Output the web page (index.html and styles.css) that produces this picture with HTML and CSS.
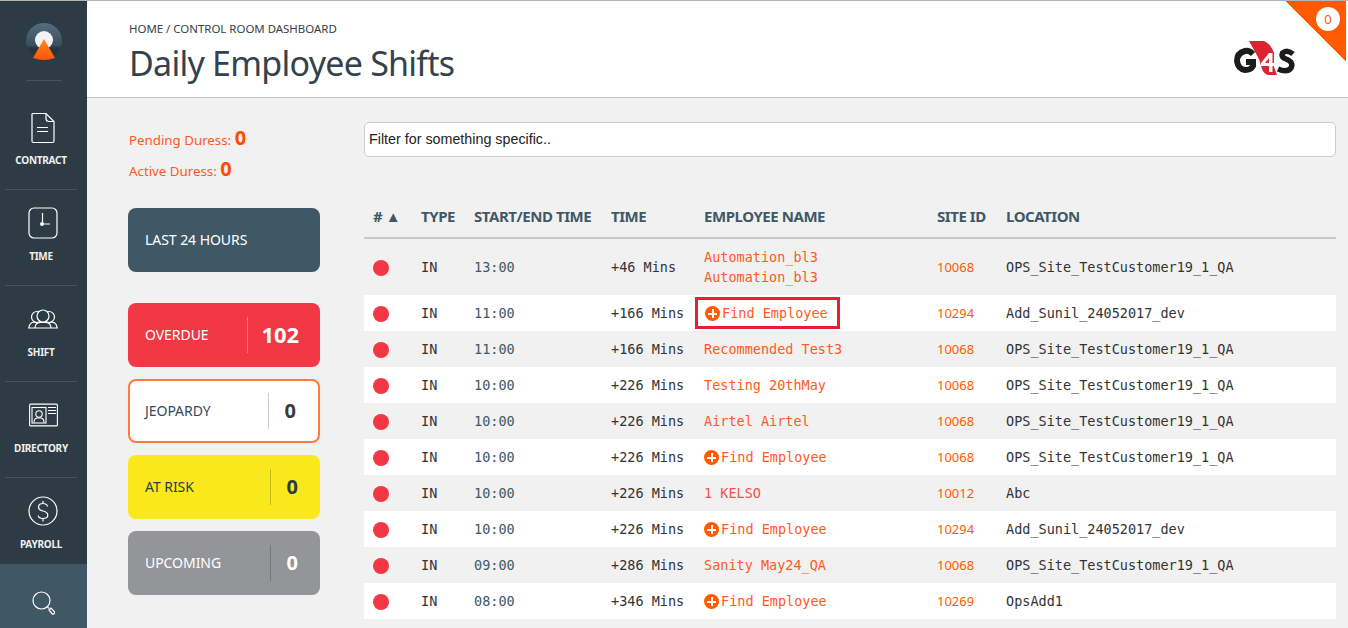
FILE: index.html
```html
<!DOCTYPE html>
<html lang="en">
<head>
<meta charset="utf-8">
<title>Daily Employee Shifts</title>
<link rel="stylesheet" href="styles.css">
</head>
<body>
<div class="app">
  <nav class="sidebar">
    <div class="brand">
      <svg width="36" height="42" viewBox="0 0 36 42">
        <defs>
          <linearGradient id="dome" x1="0" y1="0" x2="0" y2="1"><stop offset="0" stop-color="#546f80"/><stop offset=".62" stop-color="#3a4e5b"/><stop offset=".7" stop-color="#27333c"/><stop offset="1" stop-color="#2a3741"/></linearGradient>
          <linearGradient id="cone" x1="0" y1="0" x2="0" y2="1"><stop offset="0" stop-color="#ff8a1e"/><stop offset="1" stop-color="#ff5208"/></linearGradient>
        </defs>
        <circle cx="18" cy="19" r="18" fill="url(#dome)"/>
        <circle cx="18" cy="18" r="9" fill="#f1f3f6"/>
        <path d="M18 17L29 36Q18 40 7 36Z" fill="url(#cone)"/>
      </svg>
    </div>
    <a class="nav-item nav-contract">
      <svg width="24" height="31" viewBox="0 0 24 31" fill="none" stroke="#fff" stroke-width="1.2"><path d="M2 1H15L23 9V28.500Q23 30 21.500 30H2.500Q1 30 1 28.500V2Q1 1 2 1Z"/><path d="M15 1V6Q15 9 18 9H23M6 15H17M6 19H17" /></svg>
      <span>CONTRACT</span>
    </a>
    <a class="nav-item">
      <svg width="30" height="32" viewBox="0 0 30 32" fill="none" stroke="#fff" stroke-width="1.2"><rect x="1" y="1" width="28" height="30" rx="5"/><path d="M14.500 6V17H22"/><circle cx="14" cy="17" r="1.300" fill="#fff"/></svg>
      <span>TIME</span>
    </a>
    <a class="nav-item">
      <svg width="30" height="32" viewBox="0 0 30 20" fill="none" stroke="#fff" stroke-width="1.200"><circle cx="9" cy="8" r="5.500"/><circle cx="21" cy="8" r="5.500"/><circle cx="15" cy="7" r="6" fill="#2d3b45"/><path d="M1 19Q1 14 6 13L9 14M29 19Q29 14 24 13L21 14M7 19Q7 14 12 13.500H18Q23 14 23 19M0 19H30"/></svg>
      <span>SHIFT</span>
    </a>
    <a class="nav-item">
      <svg width="29" height="32" viewBox="0 0 29 23" fill="none" stroke="#fff" stroke-width="1.100"><rect x=".6" y=".6" width="27.800" height="21.800" rx="1"/><rect x="3" y="4" width="14" height="15.500"/><circle cx="10" cy="10.500" r="3.200"/><path d="M5 19Q5 15 8 14.500H12Q15 15 15 19M19 4H27M19 7H27M19 10H27" /></svg>
      <span>DIRECTORY</span>
    </a>
    <a class="nav-item nav-last">
      <svg width="30" height="31" viewBox="0 0 30 31" fill="none" stroke="#fff" stroke-width="1.200"><circle cx="15" cy="15.500" r="14"/><path d="M19.500 11Q19 8 15 8Q10.500 8 10.500 11.500Q10.500 14.500 15 15.500Q19.800 16.500 19.800 19.800Q19.800 23 15 23Q10.500 23 10.200 20M15 5.500V8M15 23V26"/></svg>
      <span>PAYROLL</span>
    </a>
    <a class="nav-search">
      <svg width="23" height="25" viewBox="0 0 23 25" fill="none" stroke="#fff" stroke-width="1.200"><circle cx="9.500" cy="9.500" r="8.500"/><path d="M15.500 16L17 17.500M17 19L19 17L22.500 20.800Q23 21.500 22 22.800Q21 23.500 20.300 23Z"/></svg>
    </a>
  </nav>
  <div class="main">
    <header class="topbar">
      <div>
        <div class="crumbs">HOME / CONTROL ROOM DASHBOARD</div>
        <h1>Daily Employee Shifts</h1>
      </div>
      <svg class="logo" width="62" height="36" viewBox="0 0 62 36">
        <path d="M15 0H30Q37 3 40 12V26L43 34H34Q30 33 28 28L25 18Z" fill="#dc2430"/>
        <path d="M35 12L27 22V25H35V31H38.500V25H42V22H38.500V12ZM35 17V22H31Z" fill="#fff" fill-rule="evenodd"/>
        <path d="M19 13Q15 9 11 10Q3 12 3 20Q4 28 11 29Q17 29 19 25V21H12" fill="none" stroke="#1c1c1c" stroke-width="6"/>
        <path d="M59 13Q53 8 48.500 12Q46.500 16 52 18Q60 21 57 27Q53 32 44 28" fill="none" stroke="#1c1c1c" stroke-width="5.500"/>
      </svg>
      <div class="corner"><span class="corner-count">0</span></div>
    </header>
    <div class="content">
      <aside class="left">
        <div class="duress">Pending Duress: <b>0</b></div>
        <div class="duress">Active Duress: <b>0</b></div>
        <div class="card card-hours"><span class="card-label">LAST 24 HOURS</span></div>
        <div class="card card-overdue"><span class="card-label">OVERDUE</span><span class="card-num">102</span></div>
        <div class="card card-jeopardy"><span class="card-label">JEOPARDY</span><span class="card-num">0</span></div>
        <div class="card card-risk"><span class="card-label">AT RISK</span><span class="card-num">0</span></div>
        <div class="card card-upcoming"><span class="card-label">UPCOMING</span><span class="card-num">0</span></div>
      </aside>
      <section class="right">
        <input class="filter" type="text" placeholder="Filter for something specific..">
        <table class="shifts">
          <colgroup><col class="c1"><col class="c2"><col class="c3"><col class="c4"><col class="c5"><col class="c6"><col></colgroup>
          <thead>
            <tr><th># ▲</th><th>TYPE</th><th>START/END TIME</th><th>TIME</th><th>EMPLOYEE NAME</th><th>SITE ID</th><th>LOCATION</th></tr>
          </thead>
          <tbody>
            <tr><td><i class="dot"></i></td><td>IN</td><td class="st">13:00</td><td>+46 Mins</td><td class="emp">Automation_bl3<br>Automation_bl3</td><td class="site">10068</td><td>OPS_Site_TestCustomer19_1_QA</td></tr>
            <tr><td><i class="dot"></i></td><td>IN</td><td class="st">11:00</td><td>+166 Mins</td><td class="emp"><span class="find boxed"><i class="plus"></i>Find Employee</span></td><td class="site">10294</td><td>Add_Sunil_24052017_dev</td></tr>
            <tr><td><i class="dot"></i></td><td>IN</td><td class="st">11:00</td><td>+166 Mins</td><td class="emp">Recommended Test3</td><td class="site">10068</td><td>OPS_Site_TestCustomer19_1_QA</td></tr>
            <tr><td><i class="dot"></i></td><td>IN</td><td class="st">10:00</td><td>+226 Mins</td><td class="emp">Testing 20thMay</td><td class="site">10068</td><td>OPS_Site_TestCustomer19_1_QA</td></tr>
            <tr><td><i class="dot"></i></td><td>IN</td><td class="st">10:00</td><td>+226 Mins</td><td class="emp">Airtel Airtel</td><td class="site">10068</td><td>OPS_Site_TestCustomer19_1_QA</td></tr>
            <tr><td><i class="dot"></i></td><td>IN</td><td class="st">10:00</td><td>+226 Mins</td><td class="emp"><span class="find"><i class="plus"></i>Find Employee</span></td><td class="site">10068</td><td>OPS_Site_TestCustomer19_1_QA</td></tr>
            <tr><td><i class="dot"></i></td><td>IN</td><td class="st">10:00</td><td>+226 Mins</td><td class="emp emp-pink">1 KELSO</td><td class="site">10012</td><td>Abc</td></tr>
            <tr><td><i class="dot"></i></td><td>IN</td><td class="st">10:00</td><td>+226 Mins</td><td class="emp"><span class="find"><i class="plus"></i>Find Employee</span></td><td class="site">10294</td><td>Add_Sunil_24052017_dev</td></tr>
            <tr><td><i class="dot"></i></td><td>IN</td><td class="st">09:00</td><td>+286 Mins</td><td class="emp">Sanity May24_QA</td><td class="site">10068</td><td>OPS_Site_TestCustomer19_1_QA</td></tr>
            <tr><td><i class="dot"></i></td><td>IN</td><td class="st">08:00</td><td>+346 Mins</td><td class="emp"><span class="find"><i class="plus"></i>Find Employee</span></td><td class="site">10269</td><td>OpsAdd1</td></tr>
          </tbody>
        </table>
      </section>
    </div>
  </div>
</div>
</body>
</html>
```

FILE: styles.css
```css
* { box-sizing: border-box; }
html, body { margin: 0; height: 628px; overflow: hidden; }
body { font-family: "Noto Sans", "Open Sans", sans-serif; background: #f1f1f1; color: #333; }
.app { display: flex; height: 628px; border-top: 1px solid #b5b5b5; }
.sidebar { width: 87px; flex: none; background: #2d3b45; display: flex; flex-direction: column; align-items: center; height: 627px; overflow: hidden; }
.brand { width: 36px; height: 80px; padding-top: 21px; border-bottom: 1px solid #46545e; flex: none; }
.nav-item { width: 72px; height: 96px; flex: none; align-self: flex-start; margin-left: 5px; display: flex; flex-direction: column; align-items: center; border-bottom: 1px solid #46545e; color: #f0f0f0; font-size: 10px; font-weight: 700; letter-spacing: -.25px; }
.nav-item svg { flex: none; height: 32px; margin: 17px 0 0 4px; }
.nav-item span { margin-top: 10px; line-height: 14px; }
.nav-contract { height: 109px; }
.nav-contract svg { margin-top: 31px; }
.nav-contract span { margin-top: 9px; }
.nav-last { border-bottom: 0; height: 86px; }
.nav-search { width: 87px; flex: 1; background: #405866; display: flex; justify-content: center; padding-top: 27px; }
.main { flex: 1; min-width: 0; display: flex; flex-direction: column; }
.topbar { position: relative; height: 97px; flex: none; background: #fff; border-bottom: 1px solid #c4c4c4; padding: 21px 0 0 42px; display: flex; justify-content: space-between; }
.crumbs { font-size: 11.45px; line-height: 14px; color: #34404a; }
h1 { margin: 4px 0 0; font-size: 34px; font-weight: 400; line-height: 46px; color: #34424d; letter-spacing: -.75px; }
.logo { margin: 19px 52px 0 0; }
.corner { position: absolute; top: 0; right: 2px; width: 60px; height: 60px; background: linear-gradient(to top right, transparent 50%, #ff5a00 50%); }
.corner-count { position: absolute; top: 6px; right: 6px; width: 24px; height: 24px; border-radius: 50%; background: #fff; color: #ff5a00; font-size: 13px; line-height: 24px; text-align: center; }
.content { flex: 1; min-height: 0; display: flex; padding: 24px 12px 0 41px; }
.left { width: 192px; flex: none; margin-right: 44px; padding-top: 1px; }
.duress { color: #ff5722; font-size: 13.3px; line-height: 30px; height: 30.5px; padding-left: 1px; }
.duress b { font-size: 20px; color: #ff4d00; }
.card { width: 192px; height: 64px; border-radius: 8px; display: flex; align-items: center; justify-content: space-between; padding: 0 16px 0 17px; margin-bottom: 12px; font-size: 14px; letter-spacing: -.05px; }
.card-label { flex: 1; padding-bottom: 2px; }
.card-num { flex: none; font-size: 20px; font-weight: 700; height: 36px; line-height: 36px; border-left: 1px solid rgba(0,0,0,.2); width: 34px; text-align: right; padding-right: 6px; }
.card-hours { background: #405866; color: #fff; margin-top: 24px; margin-bottom: 31px; }
.card-overdue { background: #f23845; color: #fff; }
.card-overdue .card-num { border-left-color: rgba(255,255,255,.3); width: 57px; padding-right: 5px; font-size: 22px; line-height: 34px; }
.card-jeopardy { background: #fff; border: 2px solid #ff7a3c; color: #34495e; padding: 0 14px 0 15px; }
.card-jeopardy .card-num { color: #3a3a3a; width: 36px; padding-right: 8px; }
.card-risk { background: #f9e81b; color: #2d3b45; }
.card-upcoming { background: #939598; color: #fff; }
.right { flex: 1; min-width: 0; }
.filter { display: block; width: 100%; height: 35px; border: 1px solid #ccc; border-radius: 5px; background: #fff; padding: 0 4px 2px; font: 14.3px "Liberation Sans", sans-serif; outline: 0; }
.filter::placeholder { color: #222; opacity: 1; }
.shifts { width: 972px; table-layout: fixed; border-collapse: collapse; margin-top: 43px; font: 13.5px/20px "DejaVu Sans Mono", monospace; color: #333; }
.c1 { width: 48px; } .c2 { width: 53px; } .c3 { width: 137px; } .c4 { width: 93px; } .c5 { width: 233px; } .c6 { width: 69px; }
th { font: 700 15px/20px "Noto Sans", sans-serif; color: #405866; text-align: left; height: 38px; padding: 0 0 6px 9px; border-bottom: 2px solid #c8c8c8; white-space: nowrap; letter-spacing: -.45px; }
td { height: 36px; padding: 0 0 0 9px; white-space: nowrap; }
tbody tr:nth-child(even) { background: #fff; }
tbody tr:first-child td { height: 57px; }
.st { color: #405866; }
.emp { color: #ff5a1f; }
.emp-pink { color: #f2524f; }
.site { color: #ff5a00; font-family: "Noto Sans", sans-serif; font-size: 13px; }
.dot { display: block; width: 16px; height: 16px; margin-top: 2px; border-radius: 50%; background: #f23845; }
.find { display: inline-block; }
.boxed { border: 3px solid #ed1c2e; margin-left: -9px; padding: 0 9px 0 7px; height: 32px; line-height: 26px; vertical-align: middle; }
.plus { display: inline-block; position: relative; width: 15px; height: 15px; margin-right: 2px; vertical-align: -3px; border-radius: 50%; background: #ff5a00; }
.plus::before { content: ""; position: absolute; left: 3px; top: 6.500px; width: 9px; height: 2px; background: #fff; }
.plus::after { content: ""; position: absolute; left: 6.500px; top: 3px; width: 2px; height: 9px; background: #fff; }
```
